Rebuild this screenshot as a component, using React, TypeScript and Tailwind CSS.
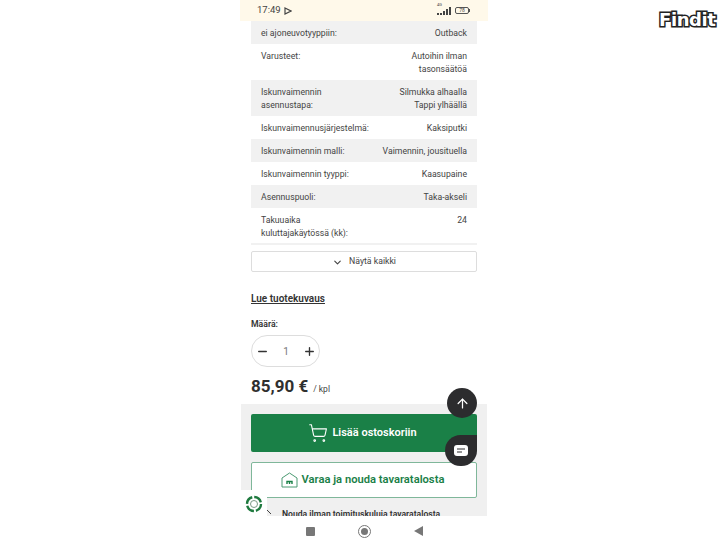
import { ArrowUp, ChevronDown, Minus, Plus, ShoppingCart } from 'lucide-react';

const specs = [
  { label: 'ei ajoneuvotyyppiin:', value: ['Outback'], gray: true, h: 'h-[23px]' },
  { label: 'Varusteet:', value: ['Autoihin ilman', 'tasonsäätöä'], gray: false, h: 'h-[36px]' },
  { label: 'Iskunvaimennin\nasennustapa:', value: ['Silmukka alhaalla', 'Tappi ylhäällä'], gray: true, h: 'h-[36px]' },
  { label: 'Iskunvaimennusjärjestelmä:', value: ['Kaksiputki'], gray: false, h: 'h-[23px]' },
  { label: 'Iskunvaimennin malli:', value: ['Vaimennin, jousituella'], gray: true, h: 'h-[23px]' },
  { label: 'Iskunvaimennin tyyppi:', value: ['Kaasupaine'], gray: false, h: 'h-[23px]' },
  { label: 'Asennuspuoli:', value: ['Taka-akseli'], gray: true, h: 'h-[23px]' },
  { label: 'Takuuaika\nkuluttajakäytössä (kk):', value: ['24'], gray: false, h: 'h-[35px]' },
];

export default function App() {
  return (
    <div className="relative h-[546px] w-[728px] overflow-hidden bg-white font-['Roboto',sans-serif] text-[#444]">
      <div className="mx-auto flex h-[546px] w-[248px] flex-col">
        {/* status bar */}
        <div className="flex h-[21px] shrink-0 items-center justify-between bg-[#fff9ea] pl-[17px] pr-[18px] text-[9.5px]">
          <span className="flex items-center gap-[3px]">
            17:49
            <svg width="8" height="8" viewBox="0 0 8 8" fill="none" stroke="#444" strokeWidth="1.2">
              <path d="M1 1 L7 4 L1 7 Z" />
            </svg>
          </span>
          <div className="flex items-center gap-[4px]">
            <div className="relative flex items-end gap-px">
              <span className="absolute -top-[5px] left-0 text-[4px] leading-[5px]">4G</span>
              <i className="h-[2px] w-[2px] bg-[#444]" />
              <i className="h-[2px] w-[2px] bg-[#444]" />
              <i className="h-[4px] w-[2px] bg-[#444]" />
              <i className="h-[6px] w-[2px] bg-[#444]" />
              <i className="h-[8px] w-[2px] bg-[#444]" />
            </div>
            <div className="flex items-center">
              <div className="flex h-[7px] w-[14px] items-center justify-center rounded-[2px] border border-[#555] text-[5px]">78</div>
              <i className="h-[3px] w-px bg-[#555]" />
            </div>
          </div>
        </div>

        <div className="flex flex-1 flex-col px-[11px]">
          {specs.map((row) => (
            <div key={row.label} className={`flex shrink-0 justify-between px-[10px] pt-[6px] text-[8.7px] leading-[13px] ${row.h} ${row.gray ? 'bg-[#f1f1f1]' : 'bg-white'}`}>
              <span className="whitespace-pre-line">{row.label}</span>
              <span className="text-right">
                {row.value.map((v) => (
                  <div key={v}>{v}</div>
                ))}
              </span>
            </div>
          ))}
          <div className="h-[2px] shrink-0 bg-[#f1f1f1]" />
          <button className="mt-[6px] flex h-[21px] shrink-0 items-center justify-center gap-[6px] rounded-[2px] border border-[#ddd] pt-[1px] text-[8.7px]">
            <ChevronDown size={11} strokeWidth={2.5} />
            Näytä kaikki
          </button>
          <a className="mt-[20px] text-[10px] font-semibold leading-[13px] text-[#333] underline">Lue tuotekuvaus</a>
          <div className="mt-[13px] text-[8.7px] font-semibold leading-[12px] text-[#333]">Määrä:</div>
          <div className="mt-[5px] flex h-[32px] w-[69px] items-center justify-between rounded-full border border-[#ddd] pl-[4px] pr-[3px] text-[10px] text-[#777]">
            <Minus size={13} strokeWidth={2.5} className="text-[#333]" />
            1
            <Plus size={13} strokeWidth={2.5} className="text-[#333]" />
          </div>
          <div className="mt-[7px] flex items-baseline gap-[5px] leading-[24px]">
            <span className="text-[17px] font-bold text-[#2f2f2f]">85,90 €</span>
            <span className="text-[8.5px]">/ kpl</span>
          </div>
        </div>

        {/* sticky buy panel */}
        <div className="mx-[1px] flex h-[112px] shrink-0 flex-col bg-[#f0f0f0] px-[10px] pt-[10px]">
          <button className="flex h-[38px] shrink-0 items-center justify-center gap-[4px] rounded-[2px] bg-[#1a8047] pr-[3px] text-[11px] font-semibold text-white">
            <ShoppingCart size={20} strokeWidth={1.3} />
            Lisää ostoskoriin
          </button>
          <button className="mt-[10px] flex h-[36px] shrink-0 items-center justify-center gap-[4px] rounded-[2px] border border-[#7fb79a] bg-white pr-[3px] text-[11.2px] font-semibold text-[#1a8047]">
            <svg width="17" height="16" viewBox="0 0 17 16" fill="none" stroke="#4a9a72" strokeWidth="1">
              <path d="M1 6 L8.5 1 L16 6 V15 H1 Z" />
              <path d="M6 12 V9.5 H11 V12 M8.5 9.5 V12" strokeWidth="1.4" stroke="#1a8047" />
            </svg>
            Varaa ja nouda tavaratalosta
          </button>
          <div className="mt-[11px] pl-[31px] text-[8.6px] font-semibold leading-[10px] text-[#333]">Nouda ilman toimituskuluja tavaratalosta</div>
        </div>

        {/* android nav */}
        <div className="flex h-[30px] shrink-0 items-center justify-center gap-[43px] bg-white">
          <div className="h-[9px] w-[9px] rounded-[1px] bg-[#777]" />
          <div className="flex h-[13px] w-[13px] items-center justify-center rounded-full border border-[#777]">
            <div className="h-[7px] w-[7px] rounded-full bg-[#777]" />
          </div>
          <div className="h-0 w-0 border-y-[5px] border-r-[9px] border-y-transparent border-r-[#777]" />
        </div>
      </div>

      {/* floating buttons */}
      <button className="absolute left-[447px] top-[388px] flex h-[30px] w-[30px] items-center justify-center rounded-full bg-[#2c2c2e] text-white">
        <ArrowUp size={15} strokeWidth={2} />
      </button>
      <button className="absolute left-[445px] top-[435px] flex h-[31px] w-[32px] items-center justify-center rounded-full rounded-tr-[5px] bg-[#2c2c2e]">
        <svg width="14" height="11" viewBox="0 0 14 11">
          <rect width="14" height="11" rx="3" fill="#fff" />
          <path d="M3 4 H11 M3 7 H8" stroke="#2c2c2e" strokeWidth="1" />
        </svg>
      </button>
      <div className="absolute left-[240px] top-[490px] flex h-[27px] w-[27px] items-center justify-center bg-white">
        <svg width="18" height="18" viewBox="0 0 18 18" fill="none">
          <circle cx="9" cy="9" r="7" stroke="#1f7a3f" strokeWidth="2.4" strokeDasharray="9 2" />
          <circle cx="9" cy="9" r="3.5" stroke="#7c9a86" strokeWidth="1" />
        </svg>
      </div>
      <svg className="absolute left-[267px] top-[510px]" width="5" height="6" viewBox="0 0 5 6" fill="none" stroke="#444">
        <path d="M0 0 L4 4" />
      </svg>

      <div className="absolute left-[659px] top-[6px] font-['DejaVu_Sans',sans-serif] text-[18px] font-bold leading-[28px] tracking-[-0.4px] text-white [-webkit-text-stroke:3px_#222] [paint-order:stroke_fill]">
        Findit
      </div>
    </div>
  );
}
